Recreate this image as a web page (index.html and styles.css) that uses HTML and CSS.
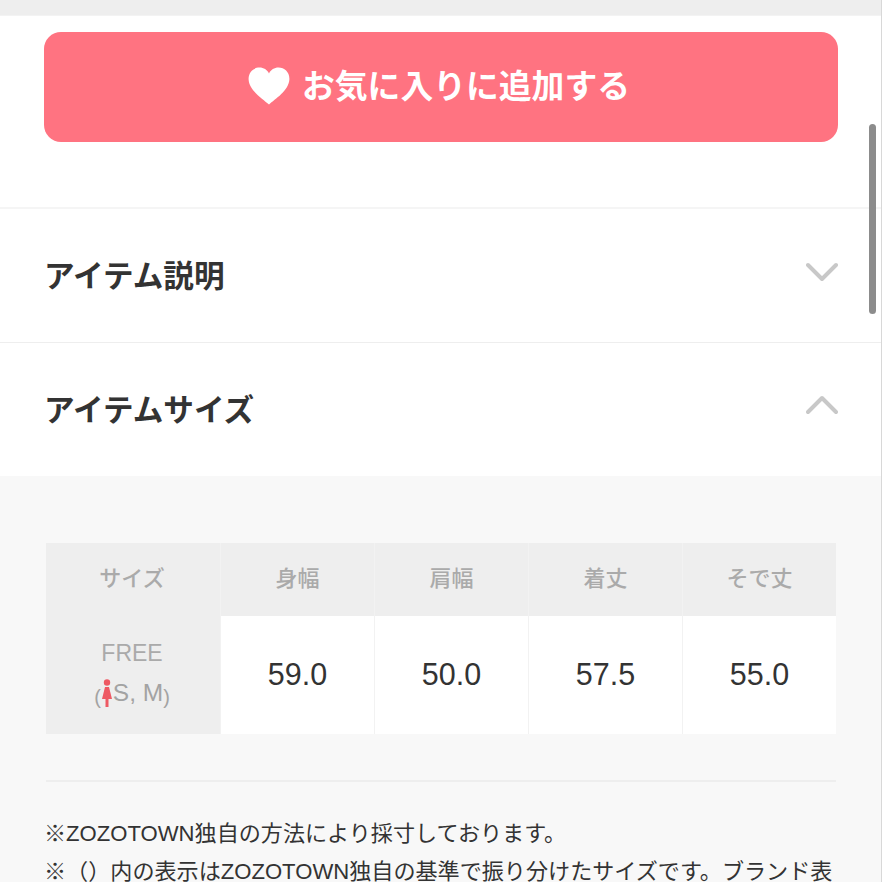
FILE: index.html
```html
<!DOCTYPE html>
<html lang="ja">
<head>
<meta charset="utf-8">
<title>アイテムサイズ</title>
<link rel="stylesheet" href="styles.css">
</head>
<body>
<div class="page">
  <div class="topbar"></div>
  <div class="fav-wrap">
    <button class="fav">
      <svg class="heart" viewBox="0 0 42 38"><path d="M21 37.500C15 32 1 23.500 .6 12.200.4 5.200 5.600.6 11.500.6c4.200 0 7.700 2.200 9.500 5.900C22.800 2.800 26.300.6 30.500.6c5.900 0 11.100 4.600 10.900 11.600C41 23.500 27 32 21 37.500z"/></svg>
      <span>お気に入りに追加する</span>
    </button>
  </div>
  <div class="acc">
    <h2>アイテム説明</h2>
    <svg class="chev" viewBox="0 0 32 20"><path d="M2 3l14 14L30 3"/></svg>
  </div>
  <div class="acc">
    <h2>アイテムサイズ</h2>
    <svg class="chev up" viewBox="0 0 32 20"><path d="M2 17L16 3l14 14"/></svg>
  </div>
  <section class="detail">
    <div class="table">
      <div class="th first">サイズ</div>
      <div class="th">身幅</div>
      <div class="th">肩幅</div>
      <div class="th">着丈</div>
      <div class="th">そで丈</div>
      <div class="rowhead">
        <div>FREE</div>
        <div class="sub"><span class="paren">(</span><svg class="woman" viewBox="0 0 10 28"><circle cx="5" cy="3.500" r="3.200"/><path d="M3 8h4l3 12H6.500v8h-3v-8H0z"/></svg>S, M<span class="paren">)</span></div>
      </div>
      <div class="td">59.0</div>
      <div class="td">50.0</div>
      <div class="td">57.5</div>
      <div class="td">55.0</div>
    </div>
    <hr class="rule">
    <p class="note">※ZOZOTOWN独自の方法により採寸しております。</p>
    <p class="note">※（）内の表示はZOZOTOWN独自の基準で振り分けたサイズです。ブランド表記のサイズとは異なる場合があります。</p>
  </section>
  <div class="scrollbar"></div>
  <div class="edge"></div>
</div>
</body>
</html>
```
FILE: styles.css
```css
* { box-sizing: border-box; }
html, body { margin: 0; height: 100%; overflow: hidden; background: #fff; }
body { font-family: "Liberation Sans", "Noto Sans CJK JP", sans-serif; }
.page { position: relative; height: 882px; overflow: hidden; }
.topbar { height: 16px; background: #eeeeee; border-bottom: 1px solid #f3f3f3; }
.fav-wrap { height: 193px; padding: 16px 44px 0; border-bottom: 2px solid #f5f5f5; }
.fav {
  display: flex; align-items: center; justify-content: center; gap: 12px;
  width: 794px; height: 110px; padding: 0 4px 2px 0; border: 0; border-radius: 17px;
  background: #ff7381; color: #fff;
  font: 700 32.800px "Noto Sans CJK JP", sans-serif;
}
.fav span { position: relative; top: -3px; }
.heart { width: 42px; height: 38px; fill: #fff; }
.acc {
  display: flex; align-items: center; justify-content: space-between;
  height: 134px; padding: 0 44px; border-bottom: 1px solid #eeeeee;
}
.acc + .acc { border-bottom: 0; height: 133px; }
.acc h2 { margin: 0 0 4px; font: 700 30.600px "Noto Sans CJK JP", sans-serif; color: #333; }
.chev { width: 32px; height: 20px; margin-bottom: 8px; fill: none; stroke: #c8c8c8; stroke-width: 4; stroke-linecap: round; stroke-linejoin: round; }
.chev.up { margin-bottom: 10px; }
.detail { background: #f8f8f8; padding: 67px 46px 0; height: 406px; }
.table {
  display: grid; grid-template-columns: 174px repeat(4, 153px); column-gap: 1px;
  grid-template-rows: 73px 118px; width: 790px; background: #f2f2f2;
}
.th, .rowhead {
  display: flex; align-items: center; justify-content: center;
  background: #eeeeee; color: #aaaaaa; font-size: 22px;
  font-family: "Noto Sans CJK JP", sans-serif; font-weight: 500;
  padding-bottom: 8px;
}
.th.first { padding-right: 2px; }
.rowhead {
  flex-direction: column; font-family: "Liberation Sans", sans-serif;
  font-size: 23px; line-height: 40px; font-weight: 400; padding: 0 2px 4px 0;
}
.sub { display: flex; align-items: center; color: #a3a3a3; font-size: 24.500px; }
.paren { font-size: 20px; position: relative; top: 4px; }
.woman { width: 10px; height: 28px; margin: 0 1px 0 1px; fill: #ee5a64; }
.td {
  display: flex; align-items: center; justify-content: center;
  background: #fff; color: #333; font-size: 30.500px; padding-bottom: 2px;
}
.rule { height: 2px; margin: 46px 0 0; border: 0; background: #eeeeee; }
.note { margin: 0 0 0 -2px; width: 794px; color: #333; font: 400 22.100px/38px "Liberation Sans", "Noto Sans CJK JP", sans-serif; }
.rule + .note { margin-top: 33px; }
.scrollbar { position: absolute; left: 869px; top: 124px; width: 7px; height: 190px; border-radius: 4px; background: #8c8c8c; }
.edge { position: absolute; right: 0; top: 0; width: 1px; height: 100%; background: #d8d8d8; }
```
